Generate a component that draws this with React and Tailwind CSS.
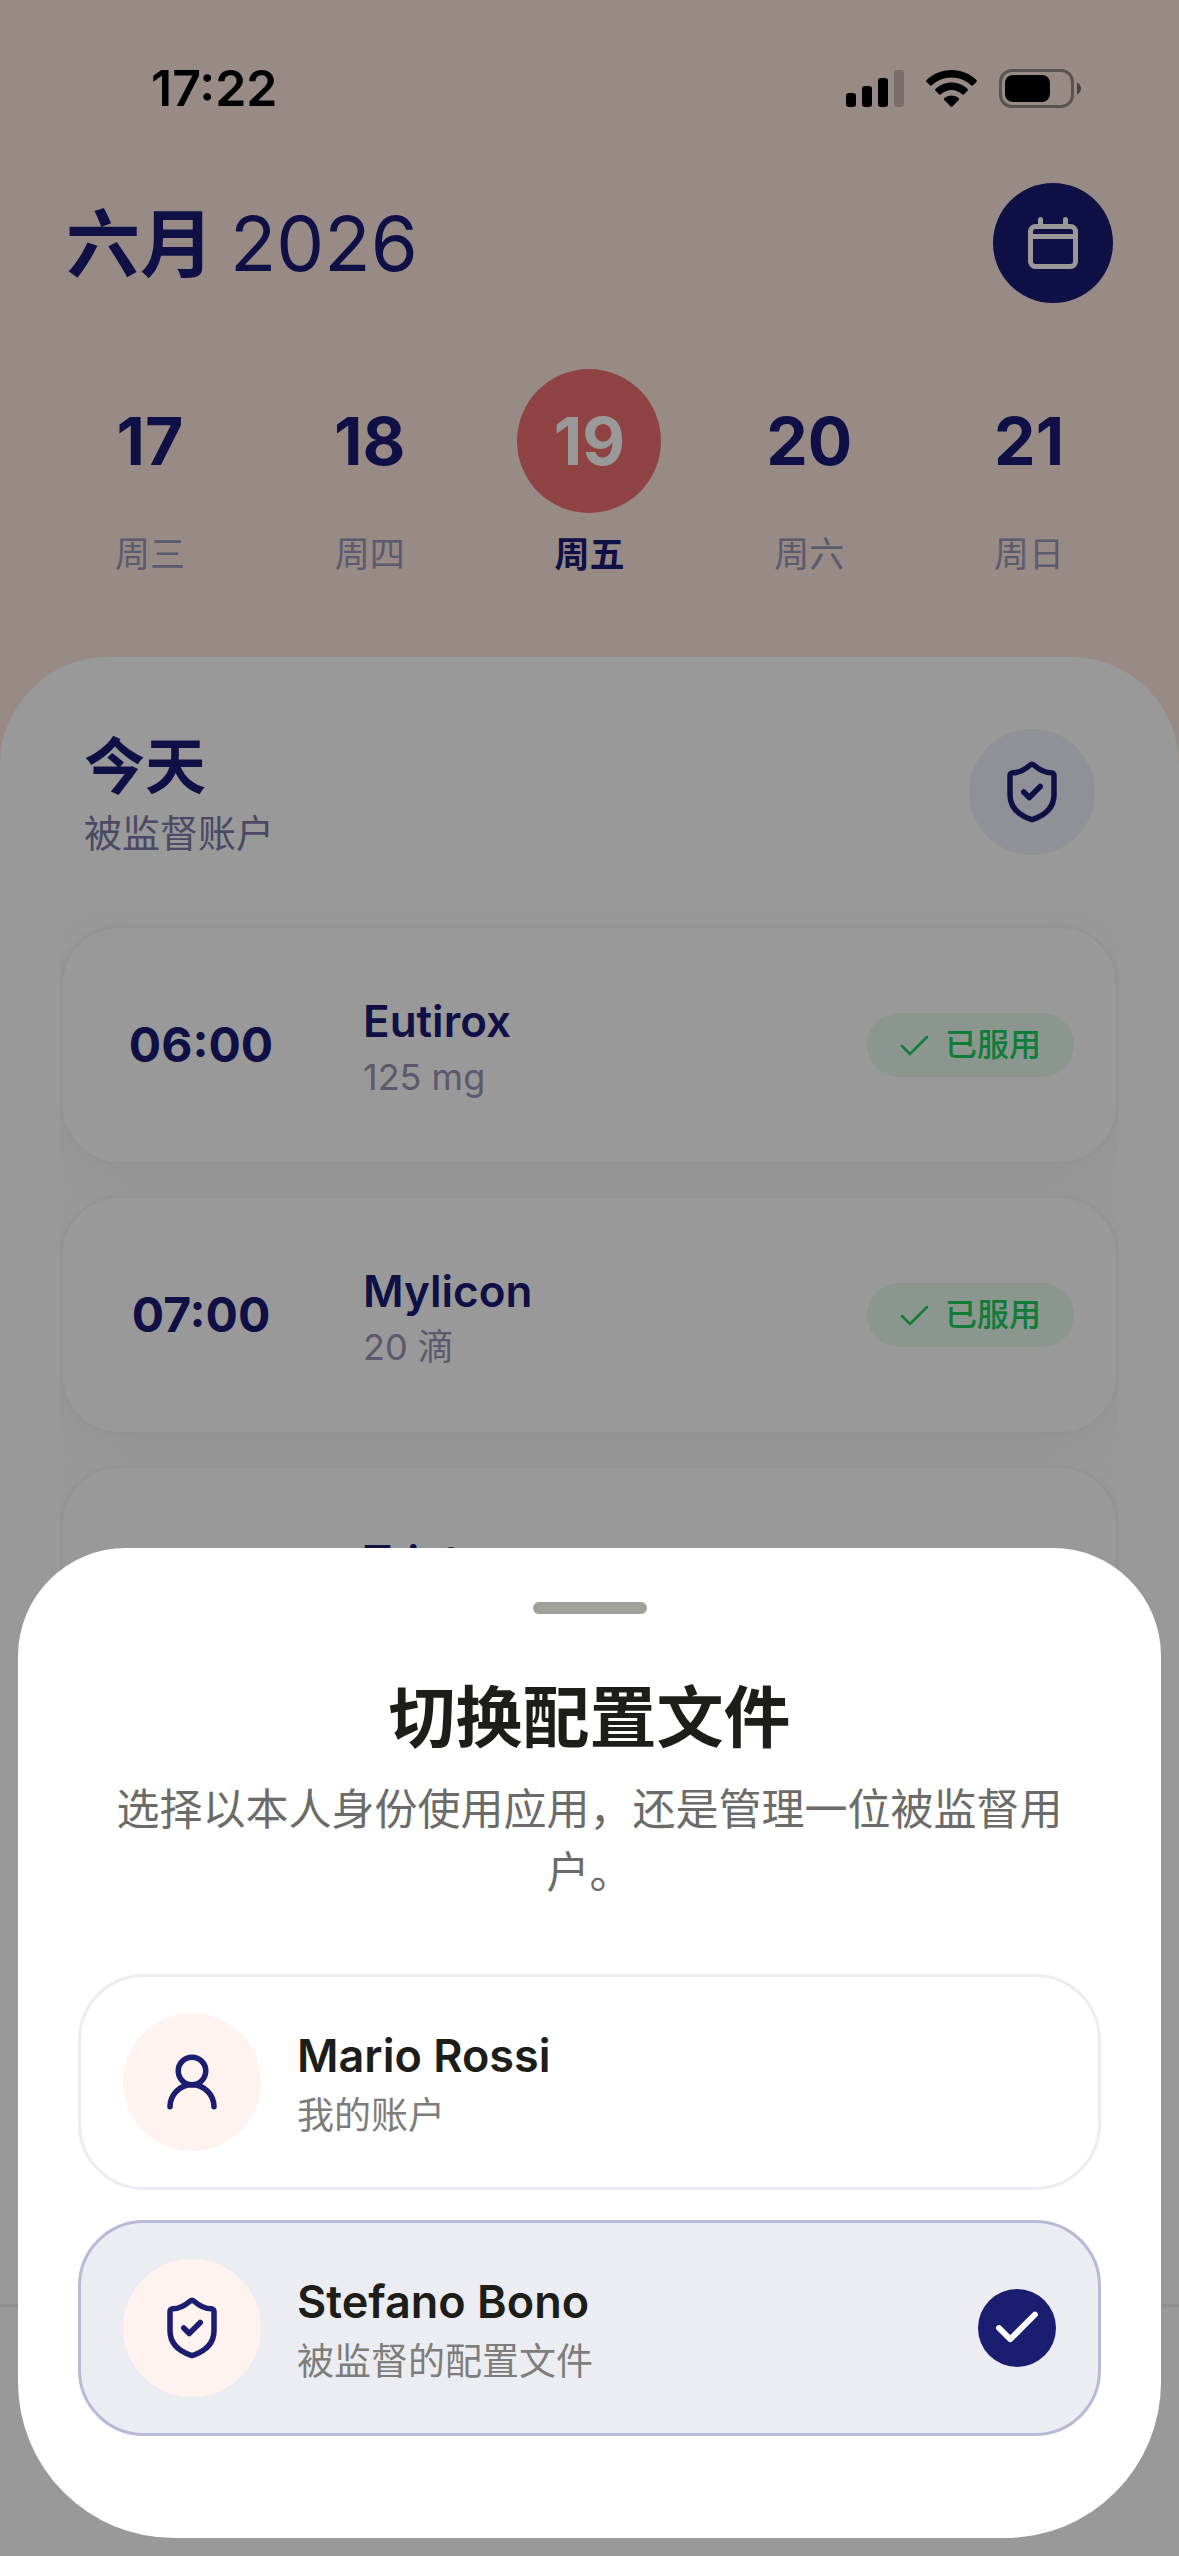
import React, { useState } from "react";
import { Check, ShieldCheck, UserRound } from "lucide-react";

const days = [
  { date: 17, label: "周三" },
  { date: 18, label: "周四" },
  { date: 19, label: "周五" },
  { date: 20, label: "周六" },
  { date: 21, label: "周日" },
];

const doses = [
  { time: "06:00", name: "Eutirox", amount: "125 mg" },
  { time: "07:00", name: "Mylicon", amount: "20 滴" },
  { time: "08:00", name: "Triatec", amount: "5 mg" },
];

const profiles = [
  { id: "me", name: "Mario Rossi", role: "我的账户", icon: UserRound },
  { id: "managed", name: "Stefano Bono", role: "被监督的配置文件", icon: ShieldCheck },
];

const StatusBar = () => (
  <div className="flex h-[176px] items-center justify-between pl-[151px] pr-[98px] text-black">
    <span className="text-[50px] font-semibold leading-none">17:22</span>
    <div className="flex items-center gap-[22px]">
      {/* Signal */}
      <svg width="58" height="37" viewBox="0 0 58 37" fill="currentColor">
        <rect x="0" y="23" width="10" height="14" rx="3" />
        <rect x="16" y="16" width="10" height="21" rx="3" />
        <rect x="32" y="8" width="10" height="29" rx="3" />
        <rect x="48" y="0" width="10" height="37" rx="3" opacity="0.2" />
      </svg>
      {/* Wifi */}
      <svg width="51" height="37" viewBox="0 0 51 37" fill="currentColor">
        <path d="M25.5 0C35 0 44 3.8 50.4 10c.6.6.6 1.300 0 1.900l-3.400 3.400c-.6.6-1.300.6-1.900 0C40 10.400 33 7.500 25.500 7.500S11 10.400 5.900 15.300c-.6.6-1.300.6-1.900 0L.6 11.900c-.6-.6-.6-1.300 0-1.900C7 3.800 16 0 25.500 0z" />
        <path d="M25.500 12.500c6.200 0 11.800 2.400 16 6.400.6.6.6 1.300 0 1.900L38 24.300c-.6.6-1.300.6-1.900 0-2.900-2.600-6.600-4.200-10.600-4.200s-7.700 1.600-10.600 4.200c-.6.6-1.300.6-1.900 0l-3.500-3.500c-.6-.6-.6-1.300 0-1.900 4.200-4 9.800-6.400 16-6.400z" />
        <path d="M25.500 25.500c2.700 0 5.200 1 7.100 2.600.6.5.6 1.300.1 1.800l-6.300 6.600c-.5.5-1.300.5-1.800 0l-6.300-6.600c-.5-.5-.5-1.300.1-1.800 1.900-1.600 4.400-2.600 7.100-2.600z" />
      </svg>
      {/* Battery */}
      <svg width="82" height="39" viewBox="0 0 82 39" fill="none">
        <rect x="1.500" y="1.500" width="72" height="36" rx="11.500" stroke="currentColor" strokeWidth="3" opacity="0.4" />
        <rect x="6" y="6" width="45" height="27" rx="8" fill="currentColor" />
        <path d="M78 13.500c2.500 1 4 3.400 4 6s-1.500 5-4 6z" fill="currentColor" opacity="0.5" />
      </svg>
    </div>
  </div>
);

const CalendarIcon = () => (
  <svg width="50" height="52" viewBox="0 0 50 52" fill="none" stroke="currentColor" strokeWidth="5" strokeLinecap="round">
    <rect x="2.500" y="9.500" width="45" height="40" rx="5" />
    <path d="M3 19.500h44" strokeLinecap="butt" />
    <path d="M12.500 2.500v6M37.500 2.500v6" />
  </svg>
);

const DoseCard = ({ time, name, amount }) => (
  <li className="flex h-[240px] items-center gap-6 rounded-[60px] border-[3px] border-[#f5f5fa] bg-white pr-[42px] shadow-[0_12px_48px_rgba(0,0,0,0.05)]">
    <time className="w-[276px] text-center text-[48px] font-bold leading-none">
      {time}
    </time>
    <div className="flex-1 pt-2">
      <h3 className="text-[44px] font-semibold leading-[56px]">{name}</h3>
      <p className="text-[36px] leading-[56px] text-[#9993b8]">{amount}</p>
    </div>
    <span className="flex h-16 items-center gap-[14px] rounded-full bg-[#e6faed] pl-[31px] pr-[33px] text-[32px] font-medium leading-none text-[#1acf5f]">
      <svg width="33" height="24" viewBox="0 0 33 24" fill="none" stroke="currentColor" strokeWidth="2.500" strokeLinecap="round">
        <path d="M4 13l8 8L29 4" />
      </svg>
      已服用
    </span>
  </li>
);

const ProfileOption = ({ profile, selected, onSelect }) => {
  const Icon = profile.icon;

  return (
    <button
      type="button"
      aria-pressed={selected}
      onClick={onSelect}
      className={`flex w-full items-center gap-9 rounded-[66px] border-[3px] px-[42px] py-9 text-left ${
        selected ? "border-[#b8bad8] bg-[#ecedf3]" : "border-[#ecedf4] bg-white"
      }`}
    >
      <span className="flex size-[138px] shrink-0 items-center justify-center rounded-full bg-[#fef3ef] text-[#1a1d70]">
        <Icon size={66} strokeWidth={2} />
      </span>
      <span className="flex flex-1 flex-col gap-1 pt-2">
        <span className="text-[45px] font-semibold leading-[56px] text-[#1d1d1a]">
          {profile.name}
        </span>
        <span className="text-[37px] leading-[56px] text-[#7d7d7b]">
          {profile.role}
        </span>
      </span>
      {selected && (
        <span className="flex size-[78px] items-center justify-center rounded-full bg-[#1a1d70] text-white">
          <Check size={54} strokeWidth={2.6} />
        </span>
      )}
    </button>
  );
};

const App = () => {
  const [activeDay, setActiveDay] = useState(19);
  const [activeProfile, setActiveProfile] = useState("managed");

  return (
    <div
      lang="zh-CN"
      className="relative flex h-screen flex-col overflow-hidden bg-[#fde6dd] font-['Inter','Noto_Sans_CJK_SC',sans-serif] text-[#191c75]"
    >
      <StatusBar />

      {/* Month */}
      <header className="flex items-center justify-between px-[66px] pt-[7px]">
        <h1 className="flex items-baseline gap-4 leading-[96px]">
          <span className="text-[74px] font-bold">六月</span>
          <span className="text-[76px]">2026</span>
        </h1>
        <button
          type="button"
          aria-label="日历"
          className="flex size-[120px] items-center justify-center rounded-full bg-[#191c75] text-white"
        >
          <CalendarIcon />
        </button>
      </header>

      {/* Day picker */}
      <div className="mt-[66px] grid grid-cols-5 px-10">
        {days.map((day) => {
          const active = day.date === activeDay;
          return (
            <button
              key={day.date}
              type="button"
              onClick={() => setActiveDay(day.date)}
              className="flex flex-col items-center gap-4"
            >
              <span
                className={`flex size-36 items-center justify-center rounded-full text-[66px] font-bold leading-none ${
                  active ? "bg-[#ee7171] text-white" : ""
                }`}
              >
                {day.date}
              </span>
              <span
                className={`text-[35px] leading-[50px] ${
                  active ? "font-bold" : "text-[#9a97b9]"
                }`}
              >
                {day.label}
              </span>
            </button>
          );
        })}
      </div>

      {/* Today */}
      <main className="mt-[78px] flex-1 rounded-t-[108px] bg-white pt-[72px]">
        <div className="flex items-start justify-between px-[84px]">
          <div>
            <h2 className="text-[61px] font-bold leading-[76px]">今天</h2>
            <p className="text-[38px] leading-[56px] text-[#7d7ba8]">被监督账户</p>
          </div>
          <span className="flex size-[126px] items-center justify-center rounded-full bg-[#f0f0ff]">
            <ShieldCheck size={66} strokeWidth={2} />
          </span>
        </div>
        <ul className="mx-[60px] mt-[46px] flex flex-col gap-[30px] overflow-hidden pt-[18px] pb-20">
          {doses.map((dose) => (
            <DoseCard key={dose.time} {...dose} />
          ))}
        </ul>
      </main>

      <footer className="absolute inset-x-0 bottom-0 h-[252px] border-t-[3px] border-[#efefef] bg-white" />

      {/* Profile sheet */}
      <div className="fixed inset-0 flex items-end bg-black/40 p-[18px]">
        <section
          role="dialog"
          aria-modal="true"
          aria-labelledby="sheet-title"
          className="flex w-full flex-col items-center rounded-t-[108px] rounded-b-[156px] bg-white px-[60px] pt-[54px] pb-[102px]"
        >
          <div className="h-3 w-[114px] rounded-full bg-[#a1a09a]" />
          <h2
            id="sheet-title"
            className="mt-16 text-[67px] font-bold leading-[80px] text-[#1d1d1a]"
          >
            切换配置文件
          </h2>
          <p className="mt-5 text-center text-[43px] leading-[63px] text-[#6b6b69]">
            选择以本人身份使用应用，还是管理一位被监督用户。
          </p>
          <div className="mt-[70px] flex w-full flex-col gap-[30px]">
            {profiles.map((profile) => (
              <ProfileOption
                key={profile.id}
                profile={profile}
                selected={profile.id === activeProfile}
                onSelect={() => setActiveProfile(profile.id)}
              />
            ))}
          </div>
        </section>
      </div>
    </div>
  );
};

export default App;
